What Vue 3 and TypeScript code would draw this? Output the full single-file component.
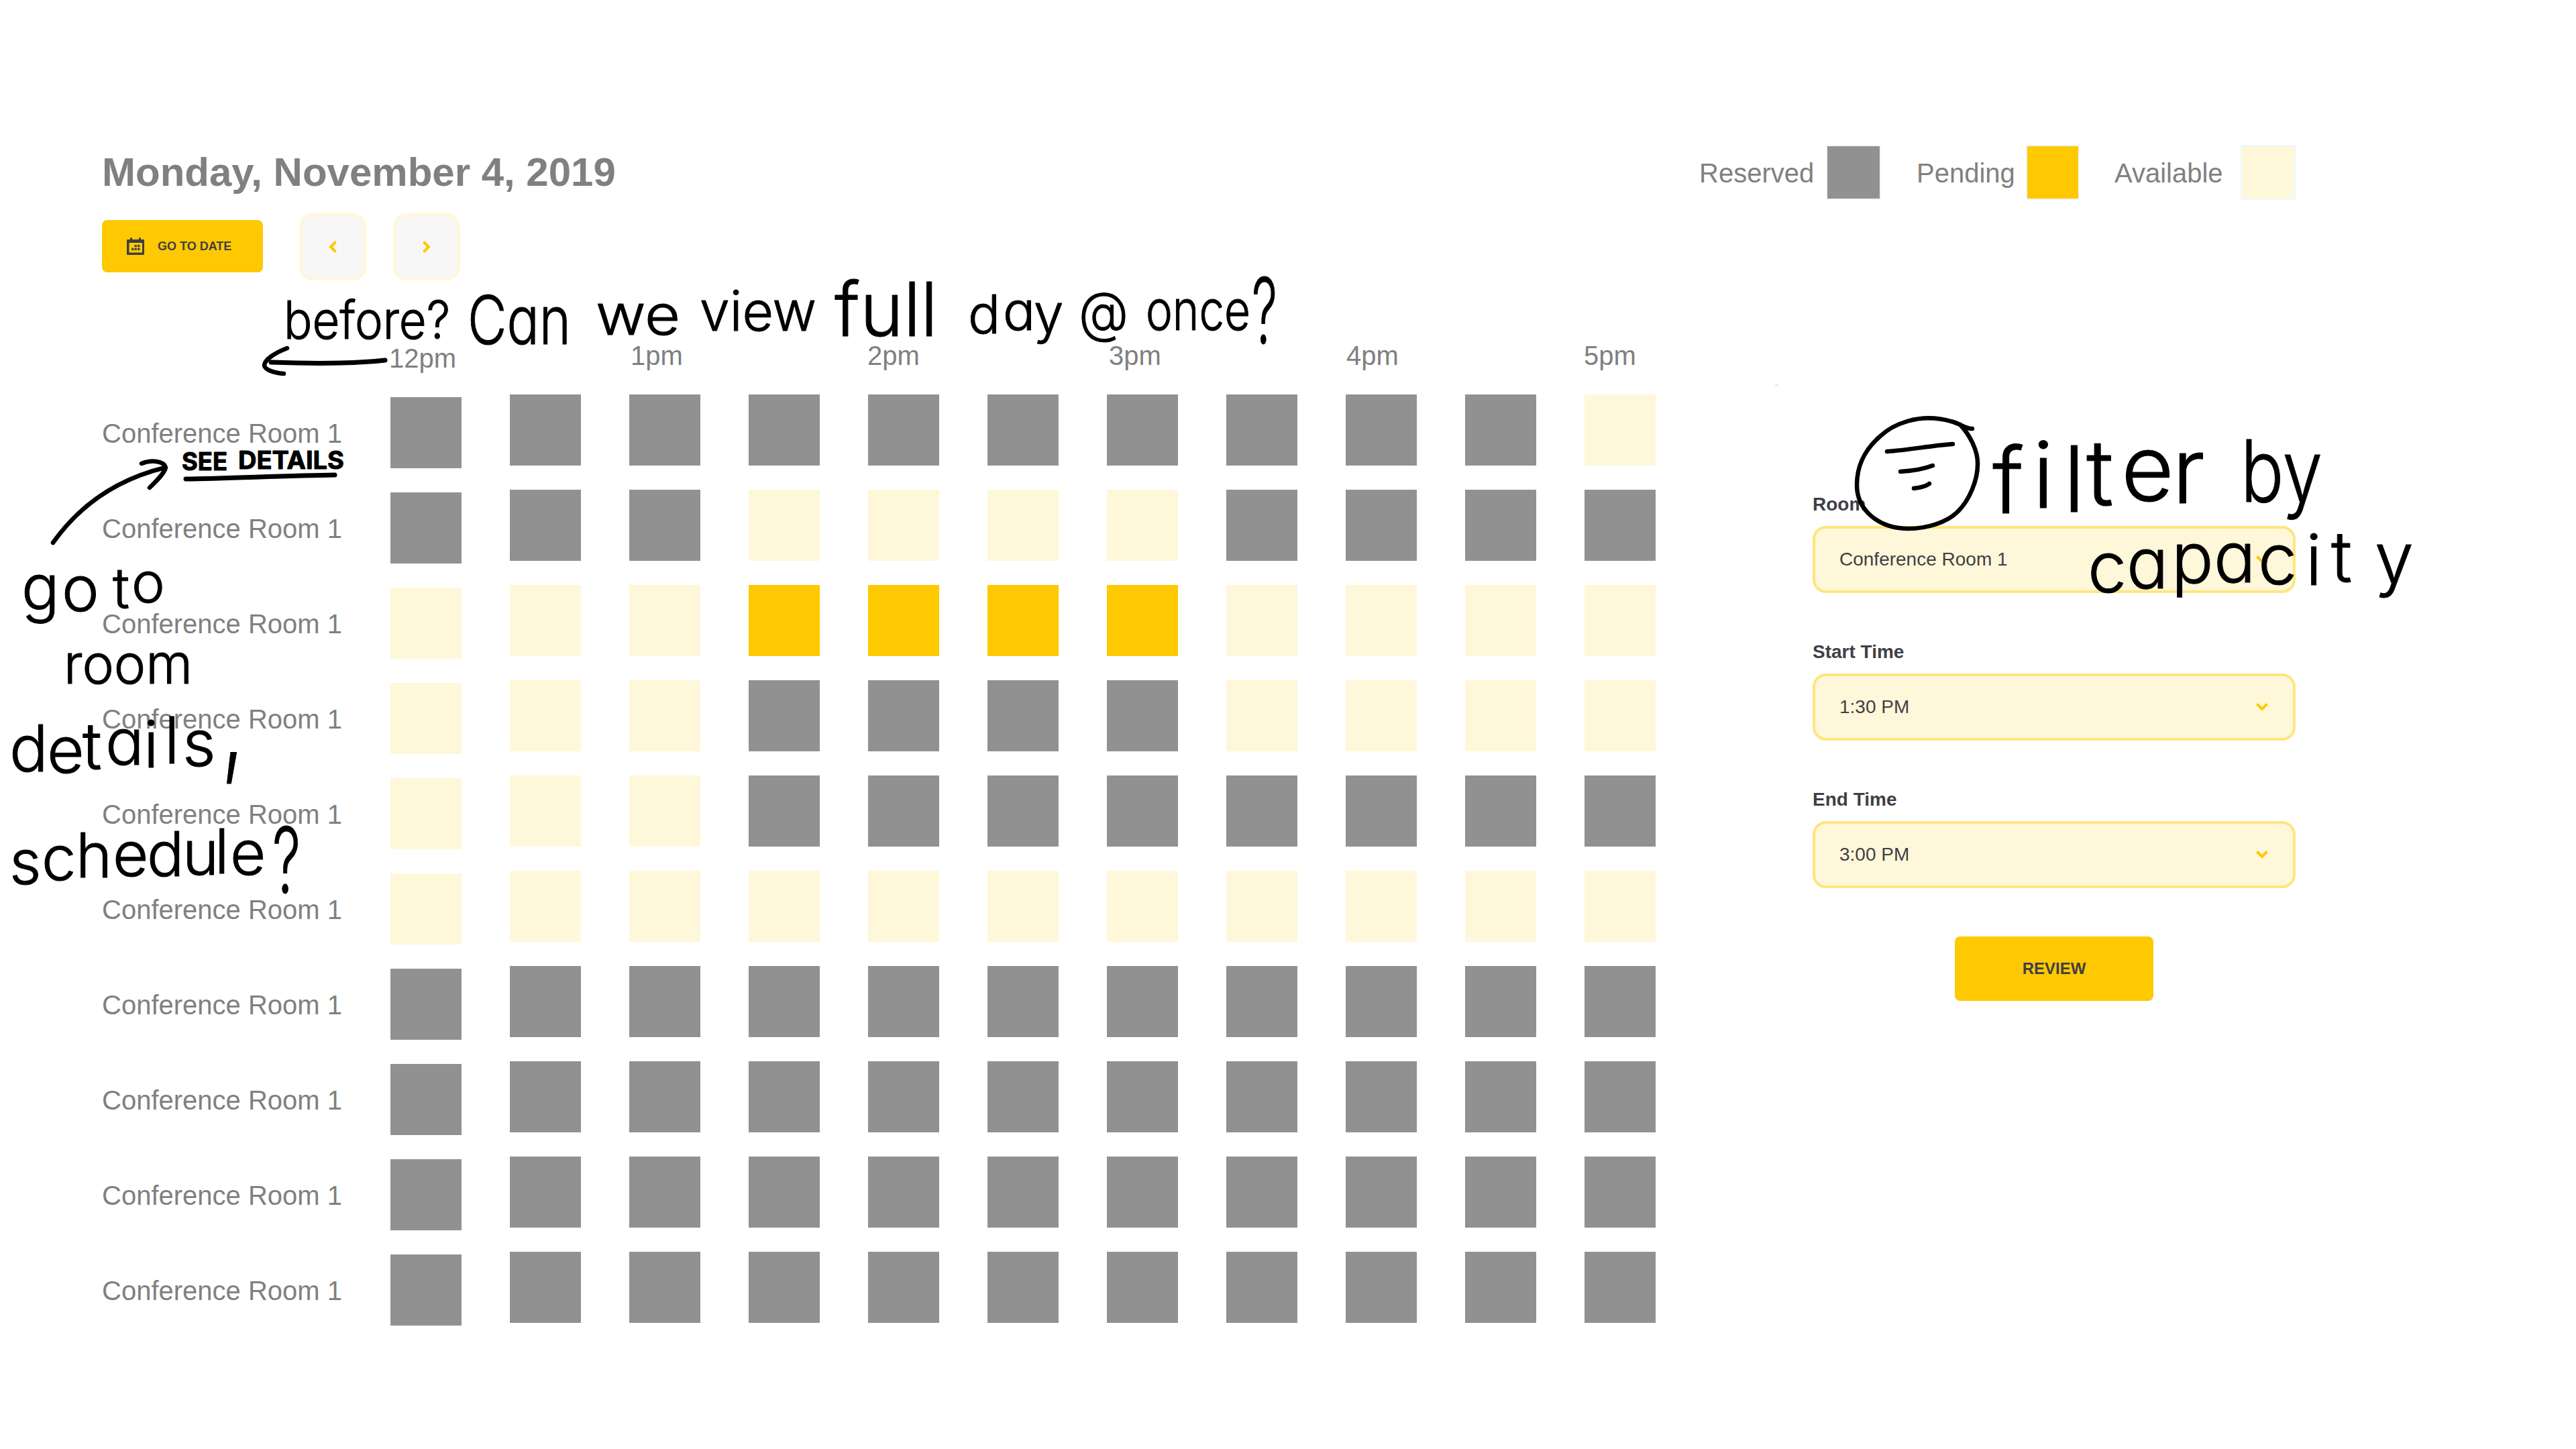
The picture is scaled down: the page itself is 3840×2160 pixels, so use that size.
<script setup lang="ts">
type State = 'reserved' | 'pending' | 'available'

interface Note {
  text: string
  x: number | string
  y: number | string
  size: number
  width?: number
  weight?: number
}

const states: Record<string, State> = { R: 'reserved', P: 'pending', A: 'available' }

const hours = ['12pm', '1pm', '2pm', '3pm', '4pm', '5pm']

const rows = [
  'RRRRRRRRRRA',
  'RRRAAAARRRR',
  'AAAPPPPAAAA',
  'AAARRRRAAAA',
  'AAARRRRRRRR',
  'AAAAAAAAAAA',
  'RRRRRRRRRRR',
  'RRRRRRRRRRR',
  'RRRRRRRRRRR',
  'RRRRRRRRRRR',
].map((slots) => ({ name: 'Conference Room 1', slots: slots.split('').map((s) => states[s]) }))

const legend: { label: string; state: State }[] = [
  { label: 'Reserved', state: 'reserved' },
  { label: 'Pending', state: 'pending' },
  { label: 'Available', state: 'available' },
]

const fields = [
  { label: 'Room', value: 'Conference Room 1' },
  { label: 'Start Time', value: '1:30 PM' },
  { label: 'End Time', value: '3:00 PM' },
]

// A list of x or y values places each letter of the note separately.
const notes: Note[] = [
  { text: 'before?', x: 423, y: 505, size: 78, width: 248 },
  { text: 'Can', x: 697, y: 513, size: 100, width: 154 },
  { text: 'we', x: 888, y: 499, size: 84, width: 126 },
  { text: 'view', x: 1043, y: 493, size: 82, width: 174 },
  { text: 'full', x: 1244, y: 501, size: 112, width: 154 },
  { text: 'day', x: '1443 1495 1541', y: '497 492 496', size: 80 },
  { text: '@', x: 1608, y: 494, size: 82, width: 74 },
  { text: 'once', x: 1708, y: 492, size: 84, width: 156 },
  { text: '?', x: 1866, y: 512, size: 136, width: 38 },
  { text: 'SEE', x: 271, y: 701, size: 37, width: 68, weight: 700 },
  { text: 'DETAILS', x: 355, y: 699, size: 37, width: 158, weight: 700 },
  { text: 'go', x: '32 92', y: '909 911', size: 94 },
  { text: 'to', x: '168 196', y: '907 898', size: 84 },
  { text: 'room', x: 95, y: 1019, size: 82, width: 192 },
  { text: 'details', x: '14 70 123 157 214 245 272', y: '1150 1152 1146 1140 1144 1138 1142', size: 96 },
  { text: ',', x: 330, y: 1138, size: 180, width: 34 },
  { text: 'schedule', x: '14 62 113 168 219 272 320 343', y: '1318 1312 1308 1306 1306 1304 1302 1304', size: 92 },
  { text: '?', x: 406, y: 1331, size: 136, width: 42 },
  { text: 'filter', x: '2970 3030 3076 3110 3162 3238', y: '765 757 763 753 746 750', size: 136 },
  { text: 'by', x: 3340, y: 748, size: 128, width: 122 },
  { text: 'capacity', x: '3112 3170 3237 3300 3366 3437 3475 3540', y: '883 877 869 868 871 872 867 869', size: 104 },
]
</script>

<template>
  <div class="page">
    <header class="header">
      <h1 class="date">Monday, November 4, 2019</h1>
      <div class="legend">
        <template v-for="item in legend" :key="item.label">
          <span class="legend-label">{{ item.label }}</span>
          <span class="swatch" :class="item.state"></span>
        </template>
      </div>
    </header>

    <div class="toolbar">
      <button class="goto">
        <svg class="calendar" viewBox="0 0 26 26">
          <path
            fill-rule="evenodd"
            d="M5 1a1.500 1 0 0 1 3 0v2h10V1a1.500 1 0 0 1 3 0v2h4a1 1 0 0 1 1 1v21a1 1 0 0 1-1 1H1a1 1 0 0 1-1-1V4a1 1 0 0 1 1-1h4zM3.500 8v14.500h19.500V8z"
          />
          <path d="M11.500 11h3.300v3.300h-3.300zM16 11h3.300v3.300H16zM7 15.700h3.300V19H7zM11.500 15.700h3.300V19h-3.300zM16 15.700h3.300V19H16z" />
        </svg>
        GO TO DATE
      </button>
      <button class="step">
        <svg class="step-icon" viewBox="0 0 12 18"><path d="M10.500 1.500 3 9l7.500 7.500" /></svg>
      </button>
      <button class="step">
        <svg class="step-icon" viewBox="0 0 12 18"><path d="M1.500 1.500 9 9l-7.500 7.500" /></svg>
      </button>
    </div>

    <main class="main">
      <section class="schedule">
        <div class="hours">
          <span v-for="hour in hours" :key="hour" class="hour">{{ hour }}</span>
        </div>
        <div v-for="(row, r) in rows" :key="r" class="row">
          <span class="room">{{ row.name }}</span>
          <span v-for="(state, s) in row.slots" :key="s" class="slot" :class="state"></span>
        </div>
      </section>

      <aside class="form">
        <div v-for="field in fields" :key="field.label" class="field">
          <label class="field-label">{{ field.label }}</label>
          <div class="select">
            <span>{{ field.value }}</span>
            <svg class="chevron" viewBox="0 0 18 12"><path d="M1.500 1.500 9 9l7.500-7.500" /></svg>
          </div>
        </div>
        <button class="review">REVIEW</button>
      </aside>
    </main>

    <svg class="ink" viewBox="0 0 3840 2160">
      <g class="strokes">
        <path d="M428 519C410 526 394 536 394 545C395 551 408 556 423 557" />
        <path class="bold" d="M404 540C460 542 530 542 574 537" />
        <path d="M79 809C116 757 168 716 246 697" />
        <path d="M211 691C226 685 244 687 247 697C245 706 232 718 223 727" />
        <path class="bold" d="M277 714C340 713 430 709 499 708" />
        <path
          d="M2940 639C2930 640 2922 631 2908 628C2860 614 2820 634 2803 650C2779 671 2768 694 2768 723C2768 760 2800 788 2845 788C2872 788 2902 779 2918 763C2936 746 2948 715 2948 693C2949 672 2936 648 2922 633"
        />
        <path d="M2813 673C2845 671 2880 664 2911 662" />
        <path d="M2833 703C2850 702 2868 699 2881 694" />
        <path d="M2853 728C2862 727 2871 725 2876 721" />
      </g>
      <path class="speck" d="M2646 575l4-1.500" />
      <text
        v-for="(note, n) in notes"
        :key="n"
        class="note"
        :x="note.x"
        :y="note.y"
        :font-size="note.size"
        :font-weight="note.weight ?? 300"
        :textLength="note.width"
        lengthAdjust="spacingAndGlyphs"
      >{{ note.text }}</text>
    </svg>
  </div>
</template>

<style>
body {
  margin: 0;
  background: #fff;
}
</style>

<style scoped>
.page {
  position: relative;
  box-sizing: border-box;
  width: 3840px;
  height: 2160px;
  padding: 216px 418px 0 152px;
  overflow: hidden;
  background: #fff;
  color: #808080;
  font-family: "Liberation Sans", Arial, sans-serif;
}

button {
  padding: 0;
  border: 0;
  font-family: inherit;
}

svg {
  display: block;
}

.header {
  display: flex;
  justify-content: space-between;
  align-items: flex-start;
  height: 82px;
}

.date {
  margin: 0;
  font-size: 60px;
  font-weight: 700;
  line-height: 82px;
  white-space: nowrap;
}

.legend {
  display: grid;
  grid-template-columns: 189px 135px 163px 132px 188px 82px;
}

.legend-label {
  height: 82px;
  font-size: 40px;
  line-height: 84px;
}

.swatch {
  box-sizing: border-box;
  width: 82px;
  height: 82px;
  border: 2px solid #eff7fe;
}

.swatch.pending {
  width: 80px;
}

.reserved {
  background: #919191;
}

.pending {
  background: #fec900;
}

.available {
  background: #fff7d9;
}

.toolbar {
  display: flex;
  align-items: flex-start;
  height: 100px;
  margin-top: 20px;
}

.goto {
  display: flex;
  align-items: center;
  gap: 20px;
  box-sizing: border-box;
  width: 240px;
  height: 78px;
  margin: 10px 54px 0 0;
  padding-left: 37px;
  border-radius: 8px;
  background: #fec900;
  color: #3f3f46;
  font-size: 18px;
  font-weight: 700;
  line-height: 76px;
  white-space: nowrap;
}

.calendar {
  width: 26px;
  height: 26px;
  fill: #3f3f46;
}

.step {
  display: flex;
  align-items: center;
  justify-content: center;
  box-sizing: border-box;
  width: 100px;
  height: 100px;
  margin-right: 40px;
  border: 4px solid #fff7d9;
  border-radius: 20px;
  background: #f7f7f7;
}

.step-icon {
  width: 12px;
  height: 18px;
  fill: none;
  stroke: #fec900;
  stroke-width: 4;
}

.main {
  display: flex;
  align-items: flex-start;
}

.schedule {
  width: 2316px;
  margin-right: 234px;
  padding-top: 89px;
  font-size: 40px;
}

.hours {
  display: grid;
  grid-template-columns: 360px 353px 360px 354px 354px auto;
  height: 81px;
  padding-left: 428px;
  line-height: 46px;
}

.hour:first-child {
  padding-top: 4px;
}

.row {
  display: grid;
  grid-template-columns: 358px repeat(11, 106px);
  column-gap: 72px;
  height: 106px;
  margin-bottom: 36px;
}

.room {
  padding-top: 5px;
  line-height: 106px;
  white-space: nowrap;
}

.slot {
  height: 106px;
}

.room + .slot {
  margin-top: 4px;
}

.form {
  display: flex;
  flex-direction: column;
  gap: 72px;
  width: 720px;
  padding-top: 318px;
  color: #3f3f46;
  font-size: 28px;
}

.field-label {
  display: block;
  margin-bottom: 16px;
  font-weight: 700;
  line-height: 32px;
}

.select {
  display: flex;
  align-items: center;
  justify-content: space-between;
  box-sizing: border-box;
  height: 100px;
  padding: 0 37px 0 36px;
  border: 4px solid #ffe57f;
  border-radius: 20px;
  background: #fff7d9;
  line-height: 92px;
}

.chevron {
  width: 18px;
  height: 12px;
  fill: none;
  stroke: #fec900;
  stroke-width: 4;
}

.review {
  align-self: center;
  width: 296px;
  height: 96px;
  border-radius: 8px;
  background: #fec900;
  color: #3f3f46;
  font-size: 24px;
  font-weight: 700;
}

.ink {
  position: absolute;
  top: 0;
  left: 0;
  width: 3840px;
  height: 2160px;
  pointer-events: none;
}

.strokes path {
  fill: none;
  stroke: #000;
  stroke-width: 6.500;
  stroke-linecap: round;
  stroke-linejoin: round;
}

.strokes .bold {
  stroke-width: 7;
}

.speck {
  fill: none;
  stroke: #bbb;
  stroke-width: 1;
}

.note {
  fill: #000;
  stroke: #000;
  stroke-width: 1;
  stroke-linejoin: round;
  font-family: Inter, "Open Sans", sans-serif;
  font-feature-settings: "cv11" 1;
}
</style>
